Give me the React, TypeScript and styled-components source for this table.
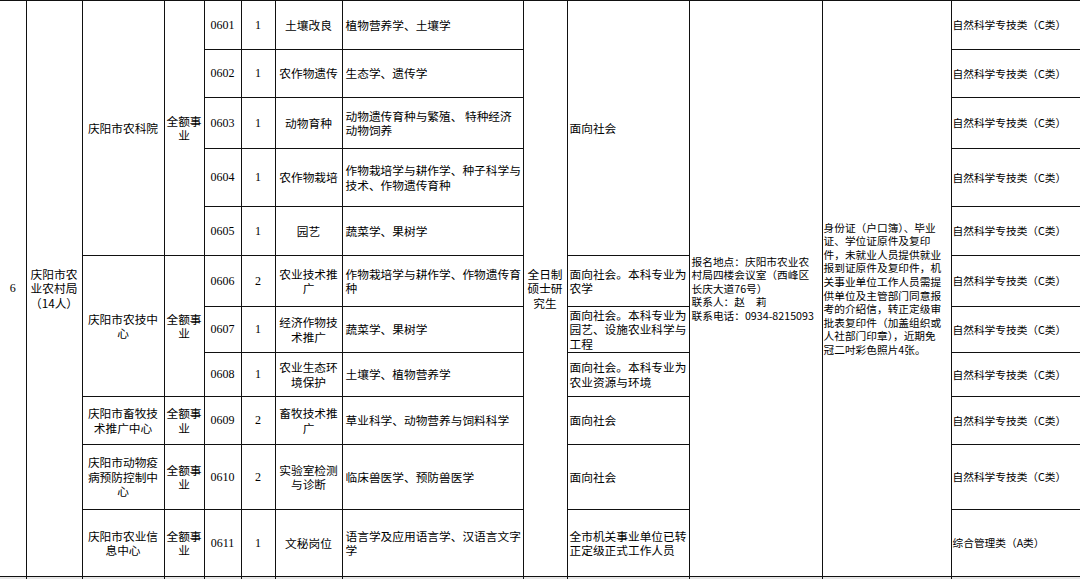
import React from "react";
import styled, { createGlobalStyle } from "styled-components";

const Global = createGlobalStyle`
  html, body { margin: 0; padding: 0; background: #fff; overflow: hidden; }
  body { width: 1080px; height: 579px; }
`;

const Sheet = styled.table`
  border-collapse: collapse;
  table-layout: fixed;
  width: 1081px;
  font-family: "Noto Sans CJK SC", sans-serif;
  color: #000;
`;

const Row = styled.tr<{ $h: number }>`
  height: ${(p) => p.$h}px;
`;

const Cell = styled.td<{
  $align?: "left" | "center";
  $pad?: number;
  $small?: boolean;
  $num?: boolean;
  $first?: boolean;
}>`
  border: 1px solid #111;
  ${(p) => (p.$first ? "border-left: none;" : "")}
  padding: 0 1px 0 ${(p) => p.$pad ?? 1}px;
  text-align: ${(p) => p.$align ?? "center"};
  vertical-align: middle;
  white-space: nowrap;
  overflow: visible;
  font-family: ${(p) =>
    p.$num ? '"Liberation Serif", serif' : '"Noto Sans CJK SC", sans-serif'};
  font-size: ${(p) => (p.$num ? "12px" : p.$small ? "10.7px" : "11.7px")};
  line-height: ${(p) => (p.$small ? "13.6px" : "14.5px")};
`;

const Tail = styled.td<{ $first?: boolean }>`
  border: 1px solid #111;
  border-bottom: none;
  ${(p) => (p.$first ? "border-left: none;" : "")}
  padding: 0;
  background: #e6e6e6;
`;

const Lines = ({ t }: { t: string[] }) => (
  <>
    {t.map((s, i) => (
      <React.Fragment key={i}>
        {i > 0 && <br />}
        {s}
      </React.Fragment>
    ))}
  </>
);

const widths = [26, 56, 82, 40, 37, 34, 67, 181, 44, 122, 133, 129, 130];
const heights = [49, 48, 51, 58, 49, 51, 46, 44, 48, 65, 67];

type Job = {
  code: string;
  n: string;
  pos: string[];
  major: string[];
  cat: string;
};

const jobs: Job[] = [
  { code: "0601", n: "1", pos: ["土壤改良"], major: ["植物营养学、土壤学"], cat: "自然科学专技类（C类）" },
  { code: "0602", n: "1", pos: ["农作物遗传"], major: ["生态学、遗传学"], cat: "自然科学专技类（C类）" },
  { code: "0603", n: "1", pos: ["动物育种"], major: ["动物遗传育种与繁殖、 特种经济", "动物饲养"], cat: "自然科学专技类（C类）" },
  { code: "0604", n: "1", pos: ["农作物栽培"], major: ["作物栽培学与耕作学、种子科学与", "技术、作物遗传育种"], cat: "自然科学专技类（C类）" },
  { code: "0605", n: "1", pos: ["园艺"], major: ["蔬菜学、果树学"], cat: "自然科学专技类（C类）" },
  { code: "0606", n: "2", pos: ["农业技术推", "广"], major: ["作物栽培学与耕作学、作物遗传育", "种"], cat: "自然科学专技类（C类）" },
  { code: "0607", n: "1", pos: ["经济作物技", "术推广"], major: ["蔬菜学、果树学"], cat: "自然科学专技类（C类）" },
  { code: "0608", n: "1", pos: ["农业生态环", "境保护"], major: ["土壤学、植物营养学"], cat: "自然科学专技类（C类）" },
  { code: "0609", n: "2", pos: ["畜牧技术推", "广"], major: ["草业科学、动物营养与饲料科学"], cat: "自然科学专技类（C类）" },
  { code: "0610", n: "2", pos: ["实验室检测", "与诊断"], major: ["临床兽医学、预防兽医学"], cat: "自然科学专技类（C类）" },
  { code: "0611", n: "1", pos: ["文秘岗位"], major: ["语言学及应用语言学、汉语言文字", "学"], cat: "综合管理类（A类）" },
];

const units: Record<number, { span: number; name: string[] }> = {
  0: { span: 5, name: ["庆阳市农科院"] },
  5: { span: 3, name: ["庆阳市农技中", "心"] },
  8: { span: 1, name: ["庆阳市畜牧技", "术推广中心"] },
  9: { span: 1, name: ["庆阳市动物疫", "病预防控制中", "心"] },
  10: { span: 1, name: ["庆阳市农业信", "息中心"] },
};

const scopes: Record<number, { span: number; text: string[] }> = {
  0: { span: 5, text: ["面向社会"] },
  5: { span: 1, text: ["面向社会。本科专业为", "农学"] },
  6: { span: 1, text: ["面向社会。本科专业为", "园艺、设施农业科学与", "工程"] },
  7: { span: 1, text: ["面向社会。本科专业为", "农业资源与环境"] },
  8: { span: 1, text: ["面向社会"] },
  9: { span: 1, text: ["面向社会"] },
  10: { span: 1, text: ["全市机关事业单位已转", "正定级正式工作人员"] },
};

const contact = [
  "报名地点：庆阳市农业农",
  "村局四楼会议室（西峰区",
  "长庆大道76号）",
  "联系人：赵　莉",
  "联系电话：0934-8215093",
];

const docs = [
  "身份证（户口簿）、毕业",
  "证、学位证原件及复印",
  "件，未就业人员提供就业",
  "报到证原件及复印件，机",
  "关事业单位工作人员需提",
  "供单位及主管部门同意报",
  "考的介绍信，转正定级审",
  "批表复印件（加盖组织或",
  "人社部门印章），近期免",
  "冠二吋彩色照片4张。",
];

export default function App() {
  const total = jobs.length;
  return (
    <>
      <Global />
      <Sheet>
        <colgroup>
          {widths.map((w, i) => (
            <col key={i} style={{ width: w }} />
          ))}
        </colgroup>
        <tbody>
          {jobs.map((j, i) => (
            <Row key={j.code} $h={heights[i]}>
              {i === 0 && (
                <>
                  <Cell rowSpan={total} $first $num>
                    6
                  </Cell>
                  <Cell rowSpan={total}>
                    <Lines t={["庆阳市农", "业农村局", "（14人）"]} />
                  </Cell>
                </>
              )}
              {units[i] && (
                <>
                  <Cell rowSpan={units[i].span}>
                    <Lines t={units[i].name} />
                  </Cell>
                  <Cell rowSpan={units[i].span}>
                    <Lines t={["全额事", "业"]} />
                  </Cell>
                </>
              )}
              <Cell $num>{j.code}</Cell>
              <Cell $num>{j.n}</Cell>
              <Cell>
                <Lines t={j.pos} />
              </Cell>
              <Cell $align="left" $pad={3}>
                <Lines t={j.major} />
              </Cell>
              {i === 0 && (
                <Cell rowSpan={total}>
                  <Lines t={["全日制", "硕士研", "究生"]} />
                </Cell>
              )}
              {scopes[i] && (
                <Cell rowSpan={scopes[i].span} $align="left" $pad={2}>
                  <Lines t={scopes[i].text} />
                </Cell>
              )}
              {i === 0 && (
                <>
                  <Cell rowSpan={total} $align="left" $pad={2} $small>
                    <Lines t={contact} />
                  </Cell>
                  <Cell rowSpan={total} $align="left" $pad={1} $small>
                    <Lines t={docs} />
                  </Cell>
                </>
              )}
              <Cell $align="left" $pad={1} $small>
                {j.cat}
              </Cell>
            </Row>
          ))}
          <Row $h={8}>
            {widths.map((_, i) => (
              <Tail key={i} $first={i === 0} />
            ))}
          </Row>
        </tbody>
      </Sheet>
    </>
  );
}
